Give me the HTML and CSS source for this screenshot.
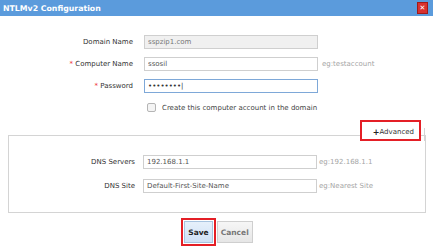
FILE: index.html
```html
<!DOCTYPE html>
<html lang="en">
<head>
  <meta charset="UTF-8">
  <title>NTLMv2 Configuration</title>
  <link rel="stylesheet" href="styles.css">
</head>
<body>
  <div class="dialog">
    <div class="title-bar">
      <span class="title">NTLMv2 Configuration</span>
      <span class="close-btn">&#x2715;</span>
    </div>

    <div class="form">
      <div class="row">
        <label class="label">Domain Name</label>
        <input class="field disabled" type="text" value="sspzip1.com" disabled>
      </div>
      <div class="row">
        <label class="label"><span class="req">*</span> Computer Name</label>
        <input class="field" type="text" value="ssosil">
        <span class="hint">eg:testaccount</span>
      </div>
      <div class="row">
        <label class="label"><span class="req">*</span> Password</label>
        <input class="field focused" type="text" value="&#8226;&#8226;&#8226;&#8226;&#8226;&#8226;&#8226;&#8226;|">
      </div>
      <div class="check-row">
        <span class="checkbox"></span>
        <span>Create this computer account in the domain</span>
      </div>
    </div>

    <div class="advanced-row">
      <div class="advanced-mark">
        <span class="plus">+</span>Advanced
      </div>
      <div class="tab-edge"></div>
    </div>

    <div class="advanced-box">
      <div class="row">
        <label class="label">DNS Servers</label>
        <input class="field" type="text" value="192.168.1.1">
        <span class="hint">eg:192.168.1.1</span>
      </div>
      <div class="row">
        <label class="label">DNS Site</label>
        <input class="field" type="text" value="Default-First-Site-Name">
        <span class="hint">eg:Nearest Site</span>
      </div>
    </div>

    <div class="buttons">
      <div class="save-mark">
        <button class="btn btn-save">Save</button>
      </div>
      <button class="btn btn-cancel">Cancel</button>
    </div>
  </div>
</body>
</html>
```

FILE: styles.css
```css
body {
  margin: 0;
  padding: 0;
  background-color: #fff;
  font-family: 'DejaVu Sans', Verdana, sans-serif;
  font-size: 7px;
  color: #333;
}

.dialog {
  width: 433px;
  height: 248px;
  overflow: hidden;
}

.title-bar {
  height: 16px;
  background-color: #5b9bdc;
  display: flex;
  align-items: center;
  justify-content: space-between;
  padding: 0 5px 0 3px;
}

.title {
  color: #fff;
  font-weight: bold;
  font-size: 7.8px;
}

.close-btn {
  width: 9px;
  height: 10px;
  background-color: #d8312f;
  border: 1px solid #a11a1a;
  color: #fff;
  font-size: 7px;
  font-weight: bold;
  line-height: 10px;
  text-align: center;
}

.form {
  padding-top: 19px;
  display: flex;
  flex-direction: column;
  gap: 8px;
}

.row {
  display: flex;
  align-items: center;
  height: 14px;
}

.label {
  width: 133px;
  text-align: right;
  margin-right: 11px;
}

.req {
  color: #e33;
}

.field {
  box-sizing: border-box;
  width: 174px;
  height: 14px;
  margin: 0;
  padding: 0 3px;
  border: 1px solid #cfcfcf;
  font-family: 'DejaVu Sans', Verdana, sans-serif;
  font-size: 7px;
  color: #555;
  background-color: #fff;
}

.field.disabled {
  background-color: #f0f0f0;
  color: #777;
}

.field.focused {
  border-color: #7ea8d8;
  color: #333;
}

.hint {
  margin-left: 4px;
  color: #a5a5a5;
}

.check-row {
  display: flex;
  align-items: center;
  gap: 6px;
  padding-left: 147px;
  margin-top: 2px;
  color: #444;
}

.checkbox {
  width: 7px;
  height: 7px;
  border: 1px solid #b5b5b5;
  border-radius: 2px;
  background-color: #f4f4f4;
}

.advanced-row {
  display: flex;
  justify-content: flex-end;
  align-items: flex-end;
  padding-right: 8px;
  margin-top: 8px;
  margin-bottom: -6px;
  position: relative;
  z-index: 1;
}

.advanced-mark {
  box-sizing: border-box;
  width: 61px;
  height: 21px;
  border: 2px solid #e41f26;
  background-color: #fff;
  display: flex;
  align-items: center;
  justify-content: flex-end;
  padding-right: 5px;
  padding-top: 3px;
  color: #333;
}

.tab-edge {
  width: 3px;
  height: 13px;
  border-right: 1px solid #d4d4d4;
}

.plus {
  font-weight: bold;
  font-size: 8px;
  color: #222;
}

.advanced-box {
  box-sizing: border-box;
  margin-left: 8px;
  width: 418px;
  height: 78px;
  border: 1px solid #d4d4d4;
  padding-top: 19px;
  display: flex;
  flex-direction: column;
  gap: 10px;
}

.advanced-box .label {
  width: 126px;
  margin-right: 8px;
}

.advanced-box .hint {
  margin-left: 2px;
}

.buttons {
  display: flex;
  justify-content: center;
  align-items: center;
  gap: 1px;
  margin-top: 5px;
  padding-left: 1px;
}

.save-mark {
  border: 2px solid #e41f26;
  padding: 1px;
}

.btn {
  height: 22px;
  margin: 0;
  padding: 0 3px;
  font-family: 'DejaVu Sans', Verdana, sans-serif;
  font-size: 7.5px;
  font-weight: bold;
}

.btn-save {
  border: 1px solid #a8c4e0;
  background: linear-gradient(#e6f0fb, #cfe1f5);
  color: #222;
}

.btn-cancel {
  border: 1px solid #cfcfcf;
  background: linear-gradient(#f6f6f6, #e6e6e6);
  color: #777;
}
```
